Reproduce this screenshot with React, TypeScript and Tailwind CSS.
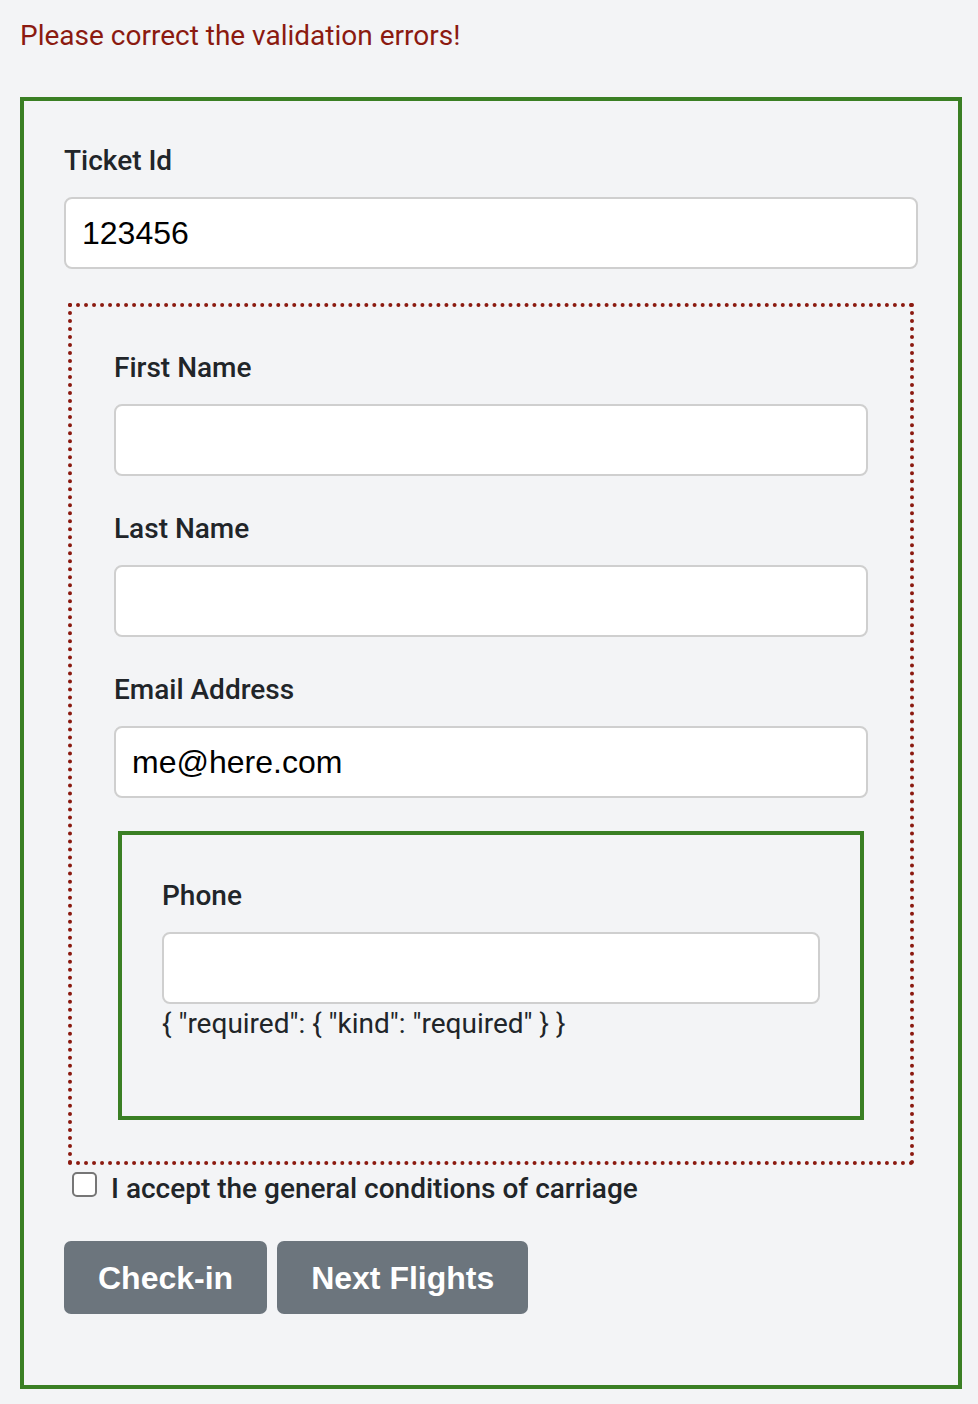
import React from 'react'

const labelCls = "block text-[28px] leading-[40px] font-medium text-[#212529] mb-[16px] font-['Roboto',sans-serif]"
const inputCls =
  "block w-full h-[72px] px-[16px] bg-white border-2 border-[#cfcfcf] rounded-[8px] text-[32px] text-black font-['Liberation_Sans',Arial,sans-serif] outline-none"

function Field({ label, value, className = '' }: { label: string; value?: string; className?: string }) {
  return (
    <div className={className}>
      <label className={labelCls}>{label}</label>
      <input className={inputCls} defaultValue={value} />
    </div>
  )
}

export default function App() {
  return (
    <div className="min-h-screen bg-[#f3f4f6] pl-5 pr-4 pt-[16px] pb-4">
      <p className="text-[28px] leading-[39px] text-[#8b1a10] font-['Roboto',sans-serif]">
        Please correct the validation errors!
      </p>

      <form className="mt-[42px] border-4 border-[#3a7f24] px-10 pt-10 pb-[71px]">
        <Field label="Ticket Id" value="123456" />

        {/* passenger group */}
        <div className="mt-[34px] mx-1 border-4 border-dotted border-[#8b1a10] px-[42px] py-[41px]">
          <Field label="First Name" className="mb-[33px]" />
          <Field label="Last Name" className="mb-[33px]" />
          <Field label="Email Address" value="me@here.com" className="mb-[33px]" />

          <div className="mx-1 border-4 border-[#3a7f24] px-10 pt-[41px] pb-[73px]">
            <label className={labelCls}>Phone</label>
            <input className={inputCls} />
            <div className="text-[28px] leading-[39px] text-[#212529] font-['Roboto',sans-serif]">
              {'{ "required": { "kind": "required" } }'}
            </div>
          </div>
        </div>

        <div className="mt-1 ml-2 flex items-start">
          <input
            type="checkbox"
            className="mt-[3px] w-[25px] h-[25px] appearance-none bg-white border-2 border-[#767676] rounded-[5px] shrink-0"
          />
          <span className="ml-[14px] text-[28px] leading-[39px] font-medium text-[#212529] font-['Roboto',sans-serif]">
            I accept the general conditions of carriage
          </span>
        </div>

        <div className="mt-[33px] flex gap-[10px]">
          <button
            type="button"
            className="h-[73px] px-[34px] rounded-[7px] bg-[#6c757d] text-white text-[32px] font-bold font-['Liberation_Sans',Arial,sans-serif]"
          >
            Check-in
          </button>
          <button
            type="button"
            className="h-[73px] px-[34px] rounded-[7px] bg-[#6c757d] text-white text-[32px] font-bold font-['Liberation_Sans',Arial,sans-serif]"
          >
            Next Flights
          </button>
        </div>
      </form>
    </div>
  )
}
